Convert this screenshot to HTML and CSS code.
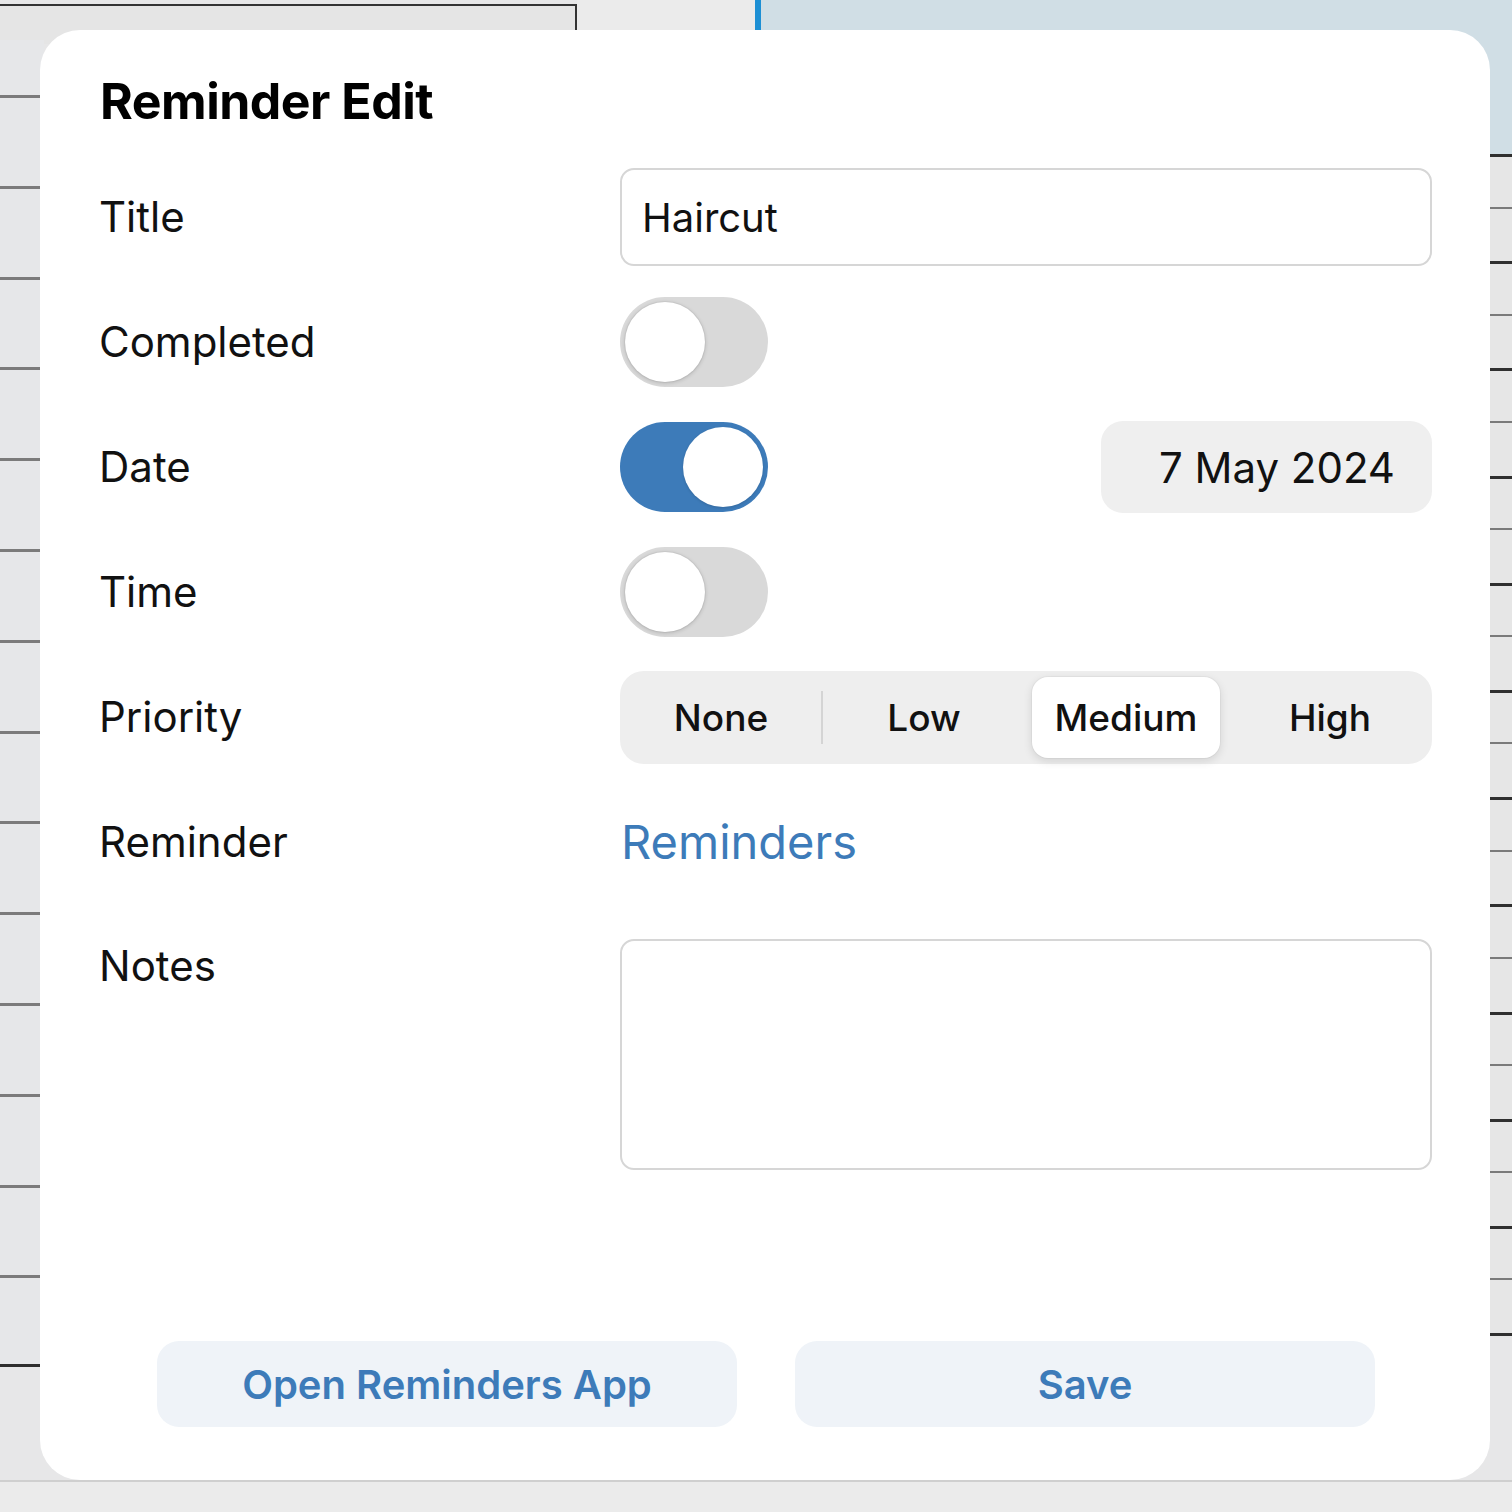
FILE: index.html
```html
<!DOCTYPE html>
<html lang="en">
<head>
<meta charset="utf-8">
<title>Reminder Edit</title>
<link rel="stylesheet" href="styles.css">
</head>
<body>
<div class="backdrop">
  <div class="bg-topbox"></div>
  <div class="bg-topmid"></div>
  <div class="bg-blueline"></div>
  <div class="bg-bluearea"></div>
  <div class="bg-left"></div>
  <div class="bg-leftend"></div>
  <div class="bg-right"></div>
  <div class="bg-bottom"></div>
</div>

<div class="modal">
  <h1 class="modal-title">Reminder Edit</h1>

  <div class="form">
    <div class="row">
      <div class="label">Title</div>
      <div class="field"><div class="input">Haircut</div></div>
    </div>

    <div class="row">
      <div class="label">Completed</div>
      <div class="field"><div class="toggle"><span class="knob"></span></div></div>
    </div>

    <div class="row">
      <div class="label">Date</div>
      <div class="field field-split">
        <div class="toggle toggle-on"><span class="knob"></span></div>
        <div class="date-pill">7 May 2024</div>
      </div>
    </div>

    <div class="row">
      <div class="label">Time</div>
      <div class="field"><div class="toggle"><span class="knob"></span></div></div>
    </div>

    <div class="row">
      <div class="label">Priority</div>
      <div class="field">
        <div class="segmented">
          <div class="seg seg-first">None</div>
          <div class="seg seg-div">Low</div>
          <div class="seg seg-active">Medium</div>
          <div class="seg seg-last">High</div>
        </div>
      </div>
    </div>

    <div class="row">
      <div class="label">Reminder</div>
      <div class="field"><span class="link">Reminders</span></div>
    </div>

    <div class="row row-top">
      <div class="label">Notes</div>
      <div class="field"><div class="textarea"></div></div>
    </div>
  </div>

  <div class="actions">
    <button class="btn">Open Reminders App</button>
    <button class="btn">Save</button>
  </div>
</div>
</body>
</html>
```

FILE: styles.css
```css
* { box-sizing: border-box; }

html, body {
  margin: 0;
  padding: 0;
}

body {
  width: 1512px;
  height: 1512px;
  overflow: hidden;
  background: #e8e8e8;
  font-family: "Inter", "Noto Sans", "Liberation Sans", sans-serif;
  color: #000;
  position: relative;
}

/* ---------- decorative backdrop (app behind the sheet) ---------- */
.backdrop {
  position: absolute;
  inset: 0;
  background: #e7e7e8;
}
.bg-topbox {
  position: absolute;
  left: 0; top: 4px;
  width: 577px; height: 40px;
  border-top: 2px solid #333;
  border-right: 2px solid #333;
  background: #e5e5e5;
}
.bg-topmid {
  position: absolute;
  left: 577px; top: 0;
  width: 178px; height: 40px;
  background: #ebebeb;
}
.bg-blueline {
  position: absolute;
  left: 755px; top: 0;
  width: 6px; height: 40px;
  background: #1c8fd4;
}
.bg-bluearea {
  position: absolute;
  left: 761px; top: 0;
  right: 0; height: 155px;
  background: #d0dee5;
}
.bg-left {
  position: absolute;
  left: 0; top: 40px;
  width: 44px; height: 1326px;
  background-color: #e6e7e9;
  background-image: repeating-linear-gradient(to bottom,
    transparent 0, transparent 55px,
    #7b7b7b 55px, #7b7b7b 58px,
    transparent 58px, transparent 90.8px);
}
.bg-leftend {
  position: absolute;
  left: 0; top: 1364px;
  width: 44px; height: 3px;
  background: #2e2e2e;
}
.bg-right {
  position: absolute;
  right: 0; top: 154px;
  width: 30px; height: 1184px;
  background-color: #e6e6e6;
  background-image: repeating-linear-gradient(to bottom,
    #2f2f2f 0, #2f2f2f 3px,
    transparent 3px, transparent 52.5px,
    #7a7a7a 52.5px, #7a7a7a 54.5px,
    transparent 54.5px, transparent 107.2px);
}
.bg-bottom {
  position: absolute;
  left: 0; right: 0; top: 1480px; bottom: 0;
  background: #ebebeb;
  border-top: 2px solid #cfcfcf;
}

/* ---------- modal sheet ---------- */
.modal {
  position: absolute;
  left: 40px; top: 30px;
  width: 1450px; height: 1450px;
  background: #fff;
  border-radius: 40px;
  padding: 38px 58px 53px 60px;
  display: flex;
  flex-direction: column;
}

.modal-title {
  margin: 0;
  font-size: 50px;
  line-height: 66px;
  font-weight: 700;
  letter-spacing: -0.5px;
}

.form {
  margin-top: 34px;
  display: flex;
  flex-direction: column;
  gap: 27px;
}

.row {
  display: grid;
  grid-template-columns: 520px 1fr;
  align-items: center;
  min-height: 98px;
}
.row-top {
  align-items: start;
  margin-top: 21px;
}

.label {
  font-size: 42px;
  line-height: 54px;
  color: #111;
  margin-left: -1px;
}

.field {
  display: flex;
  align-items: center;
}
.field-split {
  justify-content: space-between;
}

.input {
  width: 100%;
  height: 98px;
  border: 2px solid #d6d6d6;
  border-radius: 14px;
  padding: 0 20px;
  display: flex;
  align-items: center;
  font-size: 40px;
  color: #111;
}

.toggle {
  position: relative;
  width: 148px;
  height: 90px;
  border-radius: 45px;
  background: #d9d9d9;
}
.toggle .knob {
  position: absolute;
  top: 5px; left: 5px;
  width: 80px; height: 80px;
  border-radius: 50%;
  background: #fff;
  box-shadow: 0 1px 4px rgba(0,0,0,0.18), 0 0 0 1px rgba(0,0,0,0.04);
}
.toggle-on {
  background: #3d7bb9;
}
.toggle-on .knob {
  left: 63px;
  box-shadow: 0 1px 3px rgba(0,0,0,0.15);
}

.date-pill {
  width: 331px;
  height: 92px;
  border-radius: 22px;
  background: #efefef;
  display: flex;
  align-items: center;
  justify-content: flex-end;
  padding-right: 37px;
  font-size: 42px;
  color: #111;
}

.segmented {
  width: 100%;
  height: 93px;
  border-radius: 24px;
  background: #eeeeee;
  display: grid;
  grid-template-columns: repeat(4, 1fr);
  padding: 6px;
  gap: 0;
}
.seg {
  position: relative;
  display: flex;
  align-items: center;
  justify-content: center;
  font-size: 37px;
  font-weight: 500;
  color: #111;
  border-radius: 16px;
}
.seg-first { padding-right: 10px; }
.seg-div { padding-right: 4px; }
.seg-last { padding-left: 8px; }
.seg-div::before {
  content: "";
  position: absolute;
  left: -5px; top: 14px; bottom: 14px;
  width: 2px;
  background: #d4d4d4;
}
.seg-active {
  margin: 0 6px;
  background: #fff;
  box-shadow: 0 3px 10px rgba(0,0,0,0.12), 0 0 0 1px rgba(0,0,0,0.03);
}

.link {
  font-size: 47px;
  line-height: 98px;
  color: #3d7bb9;
  margin-left: 1px;
}

.textarea {
  width: 100%;
  height: 231px;
  border: 2px solid #d6d6d6;
  border-radius: 14px;
}
.row-top .label { margin-top: 0; }

.actions {
  margin-top: auto;
  display: flex;
  justify-content: center;
  gap: 58px;
}
.btn {
  width: 580px;
  height: 86px;
  border: 0;
  border-radius: 22px;
  background: #eff3f8;
  color: #3d7bb9;
  font-family: inherit;
  font-size: 40px;
  font-weight: 600;
}
```
